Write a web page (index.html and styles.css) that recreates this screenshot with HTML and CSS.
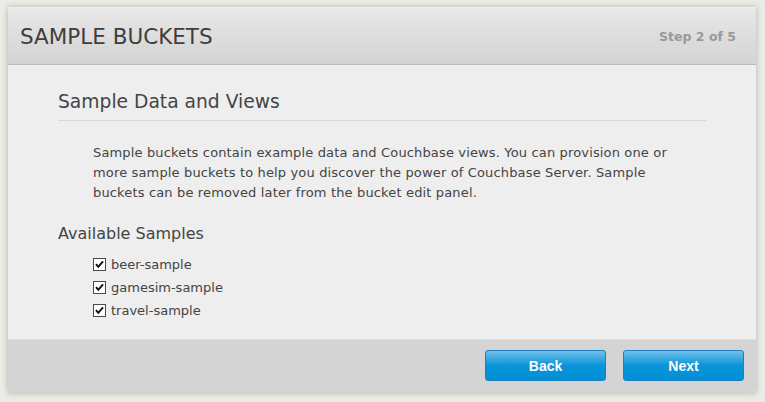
FILE: index.html
```html
<!DOCTYPE html>
<html>
<head>
<meta charset="utf-8">
<link rel="stylesheet" href="styles.css">
</head>
<body>
<div class="dialog">
  <div class="header">
    <h1 class="title">SAMPLE BUCKETS</h1>
    <span class="step">Step 2 of 5</span>
  </div>
  <div class="body">
    <h2 class="section">Sample Data and Views</h2>
    <p class="desc">Sample buckets contain example data and Couchbase views. You can provision one or more sample buckets to help you discover the power of Couchbase Server. Sample buckets can be removed later from the bucket edit panel.</p>
    <h3 class="avail">Available Samples</h3>
    <ul class="samples">
      <li><label><span class="cb"><svg viewBox="0 0 11 11" width="11" height="11"><path d="M2 5.2 L4.3 7.8 L9 2.3" fill="none" stroke="#111" stroke-width="2"/></svg></span>beer-sample</label></li>
      <li><label><span class="cb"><svg viewBox="0 0 11 11" width="11" height="11"><path d="M2 5.2 L4.3 7.8 L9 2.3" fill="none" stroke="#111" stroke-width="2"/></svg></span>gamesim-sample</label></li>
      <li><label><span class="cb"><svg viewBox="0 0 11 11" width="11" height="11"><path d="M2 5.2 L4.3 7.8 L9 2.3" fill="none" stroke="#111" stroke-width="2"/></svg></span>travel-sample</label></li>
    </ul>
  </div>
  <div class="footer">
    <button class="btn">Back</button>
    <button class="btn">Next</button>
  </div>
</div>
</body>
</html>
```
FILE: styles.css
```css
html, body {
  margin: 0;
  padding: 0;
}
body {
  background: #ecebe6;
  width: 765px;
  height: 402px;
  padding: 7px 0 0 8px;
  box-sizing: border-box;
  font-family: "DejaVu Sans", Verdana, sans-serif;
  color: #444;
}
.dialog {
  width: 748px;
  height: 386px;
  background: #eeeeee;
  box-shadow: 0 0 6px rgba(0,0,0,0.25);
  display: flex;
  flex-direction: column;
}
.header {
  height: 56px;
  background: linear-gradient(#e8e8e8, #d3d3d3);
  border-top: 1px solid #efefef;
  border-bottom: 1px solid #b5bdc3;
  display: flex;
  align-items: center;
  justify-content: space-between;
  padding: 0 20px 0 12px;
  box-sizing: content-box;
}
.title {
  margin: 0;
  font-weight: normal;
  font-size: 21.5px;
  color: #3e3e3e;
}
.step {
  font-size: 12.5px;
  font-weight: bold;
  color: #999;
}
.body {
  flex: 1;
  padding: 0 50px;
  box-sizing: border-box;
}
.section {
  margin: 25px 0 0 0;
  font-weight: normal;
  font-size: 18.7px;
  line-height: 24px;
  color: #444;
  padding-bottom: 6px;
  border-bottom: 1px solid #d6d9db;
}
.desc {
  margin: 22px 0 0 35px;
  font-size: 13px;
  letter-spacing: 0.15px;
  line-height: 20px;
  color: #444;
  width: 582px;
}
.avail {
  margin: 21px 0 0 0;
  font-weight: normal;
  font-size: 16px;
  color: #444;
}
.samples {
  list-style: none;
  margin: 10px 0 0 35px;
  padding: 0;
}
.samples li {
  height: 23px;
  font-size: 13px;
  display: flex;
  align-items: center;
}
.samples label {
  display: flex;
  align-items: center;
  gap: 5px;
}
.cb {
  width: 11px;
  height: 11px;
  border: 1px solid #4a4a4a;
  background: #fff;
  display: flex;
  align-items: center;
  justify-content: center;
}
.footer {
  height: 54px;
  background: #d4d4d4;
  border-top: 1px solid #dedede;
  box-sizing: border-box;
  display: flex;
  justify-content: flex-end;
  align-items: flex-start;
  gap: 17px;
  padding: 10px 12px 0 0;
}
.btn {
  width: 121px;
  height: 31px;
  border: 1px solid #1b7fc0;
  border-radius: 3px;
  background: linear-gradient(#70c1ec, #0a94d8 50%, #0090d6);
  color: #fff;
  font-family: "Liberation Sans", Arial, sans-serif;
  font-weight: bold;
  font-size: 14px;
  padding: 0;
}
```
